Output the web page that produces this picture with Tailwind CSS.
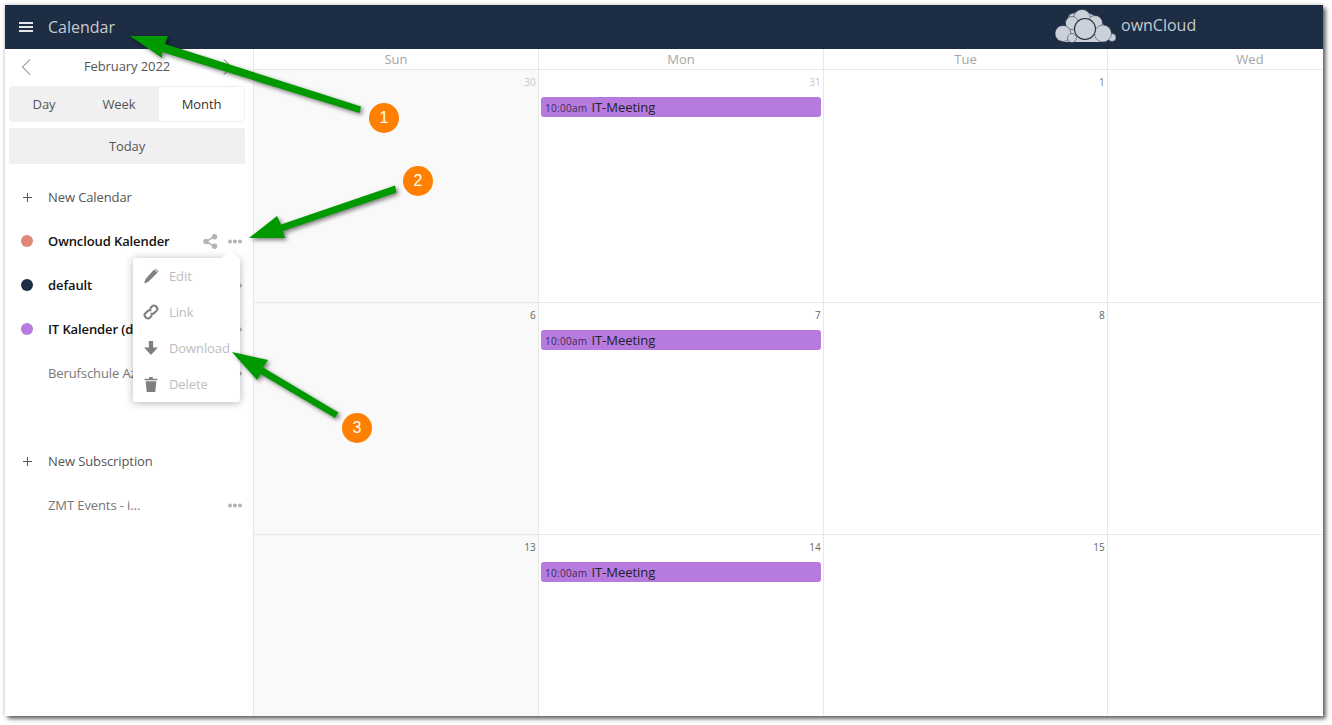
<!DOCTYPE html>
<html>
<head>
<meta charset="utf-8">
<script src="https://cdn.jsdelivr.net/npm/@tailwindcss/browser@4"></script>
</head>
<body class="bg-white">
<div class="relative w-[1332px] h-[725px] overflow-hidden bg-white pl-[5px] pt-[5px] font-['Open_Sans',sans-serif]">
  <div class="flex h-[711px] w-[1318px] flex-col overflow-hidden bg-white shadow-[3px_3px_4px_rgba(0,0,0,0.55),0_0_4px_rgba(0,0,0,0.25)]">
    <header class="flex h-[44px] shrink-0 items-center bg-[#1d2d44]">
      <svg class="ml-[14px] h-[14px] w-[14px] shrink-0" viewBox="0 0 14 14"><path d="M0 2h14v2H0zM0 6h14v2H0zM0 10h14v2H0z" fill="#e4e6ea"/></svg>
      <span class="ml-[15px] text-[16px] text-[#c6cad1]">Calendar</span>
      <div class="ml-[940px] flex items-center">
        <svg class="h-[36px] w-[62px] shrink-0" viewBox="0 0 62 36">
          <path d="M10 19 14 6 27 1 38 6 48 15 58 27 50 33 8 33z" fill="#ccd0d8"/>
          <g fill="#ccd0d8" stroke="#1d2d44" stroke-width="0.5">
            <circle cx="18" cy="8" r="3.800"/><circle cx="27" cy="9" r="8.500"/><circle cx="17" cy="14" r="6.500"/><circle cx="40" cy="14" r="7.500"/>
            <circle cx="8" cy="24.500" r="8"/><circle cx="57" cy="28.500" r="4"/><circle cx="48" cy="24.500" r="8.500"/><circle cx="17" cy="29" r="4.500"/>
          </g>
          <circle cx="30" cy="20" r="11" fill="#1d2d44"/><circle cx="30" cy="20" r="10" fill="#ccd0d8"/>
        </svg>
        <span class="ml-[4px] -translate-y-[2px] text-[16px] text-[#c6cad1]">ownCloud</span>
      </div>
    </header>
    <div class="flex min-h-0 flex-1">
      <aside class="w-[249px] shrink-0 border-r border-[#e8e8e8] bg-white tracking-[-0.1px]">
        <div class="flex h-[37px] items-center justify-between pb-[5px] pl-[16px] pr-[20px] pt-[3px]">
          <svg class="h-[16px] w-[10px]" viewBox="0 0 10 16"><path d="M9 .5 1.500 8 9 15.500" fill="none" stroke="#666" stroke-width="1"/></svg>
          <span class="text-[13px] text-[#555]">February 2022</span>
          <svg class="h-[16px] w-[10px]" viewBox="0 0 10 16"><path d="M1 .5 8.500 8 1 15.500" fill="none" stroke="#666" stroke-width="1"/></svg>
        </div>
        <div class="mx-[4px] flex h-[36px] w-[236px] overflow-hidden rounded-[3px] border border-[#efefef] text-[13px]">
          <div class="flex w-[69px] items-center justify-center border-r border-[#ececec] bg-[#f0f0f0] text-[#555]"><span class="translate-y-px">Day</span></div>
          <div class="flex w-[80px] items-center justify-center bg-[#f0f0f0] text-[#555]"><span class="translate-y-px">Week</span></div>
          <div class="flex flex-1 items-center justify-center bg-white text-[#333]"><span class="translate-y-px">Month</span></div>
        </div>
        <div class="mx-[4px] mt-[6px] flex h-[36px] w-[236px] items-center justify-center rounded-[3px] bg-[#f0f0f0] text-[13px] text-[#555]"><span class="translate-y-px">Today</span></div>
        <div class="mt-[11px] flex h-[44px] items-center pl-[17px] text-[13px] text-[#555]">
          <svg class="h-[11px] w-[11px]" viewBox="0 0 11 11"><path d="M5.500 1v9M1 5.500h9" stroke="#555" stroke-width="1"/></svg>
          <span class="ml-[15px] translate-y-px">New Calendar</span>
        </div>
        <div class="flex h-[44px] items-center pl-[16px] text-[13px] font-semibold text-[#111]">
          <span class="h-[12px] w-[12px] rounded-full bg-[#df8777]"></span>
          <span class="ml-[15px] w-[155px] translate-y-px whitespace-nowrap">Owncloud Kalender</span>
          <svg class="h-[15px] w-[15px]" viewBox="0 0 15 15" fill="#b3b3b3"><circle cx="11.500" cy="2.700" r="2.700"/><circle cx="3" cy="7.500" r="2.700"/><circle cx="11.500" cy="12.300" r="2.700"/><path d="M3 7.500l8.500-4.800M3 7.500l8.500 4.800" stroke="#b3b3b3" stroke-width="1.500" fill="none"/></svg>
          <svg class="ml-[10px] h-[5px] w-[14px]" viewBox="0 0 14 5" fill="#b3b3b3"><circle cx="2" cy="2.500" r="2"/><circle cx="7" cy="2.500" r="2"/><circle cx="12" cy="2.500" r="2"/></svg>
        </div>
        <div class="flex h-[44px] items-center pl-[16px] text-[13px] font-semibold text-[#111]">
          <span class="h-[12px] w-[12px] rounded-full bg-[#1d2d44]"></span>
          <span class="ml-[15px] translate-y-px">default</span>
          <svg class="ml-auto mr-[11px] h-[5px] w-[14px]" viewBox="0 0 14 5" fill="#b3b3b3"><circle cx="12" cy="2.500" r="2"/></svg>
        </div>
        <div class="flex h-[44px] items-center pl-[16px] text-[13px] font-semibold text-[#111]">
          <span class="h-[12px] w-[12px] rounded-full bg-[#b77be0]"></span>
          <span class="ml-[15px] translate-y-px whitespace-nowrap">IT Kalender (d</span>
          <svg class="ml-auto mr-[11px] h-[5px] w-[14px]" viewBox="0 0 14 5" fill="#b3b3b3"><circle cx="12" cy="2.500" r="2"/></svg>
        </div>
        <div class="flex h-[44px] items-center pl-[43px] text-[13px] text-[#777]">
          <span class="translate-y-px whitespace-nowrap">Berufschule Az</span>
          <svg class="ml-auto mr-[11px] h-[5px] w-[14px]" viewBox="0 0 14 5" fill="#b3b3b3"><circle cx="12" cy="2.500" r="2"/></svg>
        </div>
        <div class="mt-[44px] flex h-[44px] items-center pl-[17px] text-[13px] text-[#555]">
          <svg class="h-[11px] w-[11px]" viewBox="0 0 11 11"><path d="M5.500 1v9M1 5.500h9" stroke="#555" stroke-width="1"/></svg>
          <span class="ml-[15px] translate-y-px">New Subscription</span>
        </div>
        <div class="flex h-[44px] items-center pl-[43px] text-[13px] text-[#777]">
          <span class="translate-y-px">ZMT Events - i...</span>
          <svg class="ml-auto mr-[11px] h-[5px] w-[14px]" viewBox="0 0 14 5" fill="#b3b3b3"><circle cx="2" cy="2.500" r="2"/><circle cx="7" cy="2.500" r="2"/><circle cx="12" cy="2.500" r="2"/></svg>
        </div>
      </aside>
      <main class="min-w-0 flex-1 overflow-hidden">
        <div class="grid h-[21px] grid-cols-[285px_285px_284px_284px] border-b border-[#e8e8e8] text-center text-[13px] leading-[20px] text-[#a6a6a6]">
          <div class="border-r border-[#e8e8e8]">Sun</div>
          <div class="border-r border-[#e8e8e8]">Mon</div>
          <div class="border-r border-[#e8e8e8]">Tue</div>
          <div>Wed</div>
        </div>
        <div class="grid h-[233px] grid-cols-[285px_285px_284px_284px] border-b border-[#e8e8e8] text-right text-[10px] leading-[14px] tracking-[0.2px]">
          <div class="border-r border-[#e8e8e8] bg-[#f9f9f9] pr-[2px] pt-[5px] text-[#c8c8c8]">30</div>
          <div class="border-r border-[#e8e8e8] pr-[2px] pt-[5px] text-[#c8c8c8]">31
            <div class="ml-[2px] mt-[8px] flex h-[20px] w-[280px] items-center rounded-[3px] bg-[#b77be0] pl-[4px] text-left text-[#222]"><span class="translate-y-px text-[10px] tracking-[0.3px] text-[#3d2b52]">10:00am</span><span class="ml-[4px] text-[13px] tracking-[-0.05px]">IT-Meeting</span></div>
          </div>
          <div class="border-r border-[#e8e8e8] pr-[2px] pt-[5px] text-[#777]">1</div>
          <div></div>
        </div>
        <div class="grid h-[232px] grid-cols-[285px_285px_284px_284px] border-b border-[#e8e8e8] text-right text-[10px] leading-[14px] tracking-[0.2px] text-[#666]">
          <div class="border-r border-[#e8e8e8] bg-[#f9f9f9] pr-[2px] pt-[5px]">6</div>
          <div class="border-r border-[#e8e8e8] pr-[2px] pt-[5px]">7
            <div class="ml-[2px] mt-[8px] flex h-[20px] w-[280px] items-center rounded-[3px] bg-[#b77be0] pl-[4px] text-left text-[#222]"><span class="translate-y-px text-[10px] tracking-[0.3px] text-[#3d2b52]">10:00am</span><span class="ml-[4px] text-[13px] tracking-[-0.05px]">IT-Meeting</span></div>
          </div>
          <div class="border-r border-[#e8e8e8] pr-[2px] pt-[5px]">8</div>
          <div></div>
        </div>
        <div class="grid h-[181px] grid-cols-[285px_285px_284px_284px] text-right text-[10px] leading-[14px] tracking-[0.2px] text-[#666]">
          <div class="border-r border-[#e8e8e8] bg-[#f9f9f9] pr-[2px] pt-[5px]">13</div>
          <div class="border-r border-[#e8e8e8] pr-[2px] pt-[5px]">14
            <div class="ml-[2px] mt-[8px] flex h-[20px] w-[280px] items-center rounded-[3px] bg-[#b77be0] pl-[4px] text-left text-[#222]"><span class="translate-y-px text-[10px] tracking-[0.3px] text-[#3d2b52]">10:00am</span><span class="ml-[4px] text-[13px] tracking-[-0.05px]">IT-Meeting</span></div>
          </div>
          <div class="border-r border-[#e8e8e8] pr-[2px] pt-[5px]">15</div>
          <div></div>
        </div>
      </main>
    </div>
  </div>

  <!-- popover menu -->
  <div class="absolute left-[133px] top-[258px] w-[107px] rounded-[3px] bg-white text-[13px] tracking-[-0.1px] text-[#bdbdbd] shadow-[0_1px_8px_rgba(0,0,0,0.3)]">
    <div class="absolute -top-[7px] left-[87px] h-0 w-0 border-x-[10px] border-b-[8px] border-x-transparent border-b-white"></div>
    <div class="flex h-[36px] items-center pl-[10px]">
      <svg class="h-[16px] w-[16px]" viewBox="0 0 15 15" fill="#808080"><path d="M10.500 1.500 13.500 4.500 5 13 1 14.500 2.500 10z"/><path d="M11 .8l.8-.4 2.800 2.800-.6 .8z"/></svg>
      <span class="ml-[10px] translate-y-px">Edit</span>
    </div>
    <div class="flex h-[36px] items-center pl-[10px]">
      <svg class="h-[16px] w-[16px]" viewBox="0 0 15 15" fill="none" stroke="#808080" stroke-width="2"><path d="M6.500 4.500l2-2.300a2.500 2.500 0 0 1 3.600 0l.6.6a2.500 2.500 0 0 1 0 3.500l-2.200 2.200a2.500 2.500 0 0 1-3.300.2"/><path d="M8.500 10.500l-2 2.300a2.500 2.500 0 0 1-3.600 0l-.6-.6a2.500 2.500 0 0 1 0-3.500l2.200-2.200a2.500 2.500 0 0 1 3.300-.2"/></svg>
      <span class="ml-[10px] translate-y-px">Link</span>
    </div>
    <div class="flex h-[36px] items-center pl-[10px]">
      <svg class="h-[16px] w-[16px]" viewBox="0 0 15 15" fill="#808080"><path d="M5.500 1h4v6h4.500l-6.500 7L1 7h4.500z"/></svg>
      <span class="ml-[10px] translate-y-px">Download</span>
    </div>
    <div class="flex h-[36px] items-center pl-[10px]">
      <svg class="h-[16px] w-[16px]" viewBox="0 0 15 15" fill="#808080"><path d="M1.500 2.500h4l.5-1.500h3l.5 1.500h4v1.500h-12z"/><path d="M2.500 5h10l-1 10h-8z"/></svg>
      <span class="ml-[10px] translate-y-px">Delete</span>
    </div>
  </div>

  <!-- annotation arrows -->
  <svg class="pointer-events-none absolute left-0 top-0 drop-shadow-[2px_2px_2px_rgba(0,0,0,0.5)]" width="1332" height="725" viewBox="0 0 1332 725">
    <g fill="#009900">
      <path d="M130 36 168 36 165 44 361 106.500 359.500 113 162 52 162 58z"/>
      <path d="M249 238 277 216 281 224.500 395 185.500 396.500 192.500 283 231 285 238z"/>
      <path d="M232 352 268 360 263 367.500 338.500 412.500 335 418 260.500 374 257 380z"/>
    </g>
  </svg>
  <div class="absolute left-[369px] top-[103px] flex h-[30px] w-[30px] items-center justify-center rounded-full bg-[#ff7f00] font-['Liberation_Sans',sans-serif] text-[16px] text-white">1</div>
  <div class="absolute left-[403px] top-[166px] flex h-[30px] w-[30px] items-center justify-center rounded-full bg-[#ff7f00] font-['Liberation_Sans',sans-serif] text-[16px] text-white">2</div>
  <div class="absolute left-[342px] top-[413px] flex h-[30px] w-[30px] items-center justify-center rounded-full bg-[#ff7f00] font-['Liberation_Sans',sans-serif] text-[16px] text-white">3</div>
</div>
</body>
</html>
